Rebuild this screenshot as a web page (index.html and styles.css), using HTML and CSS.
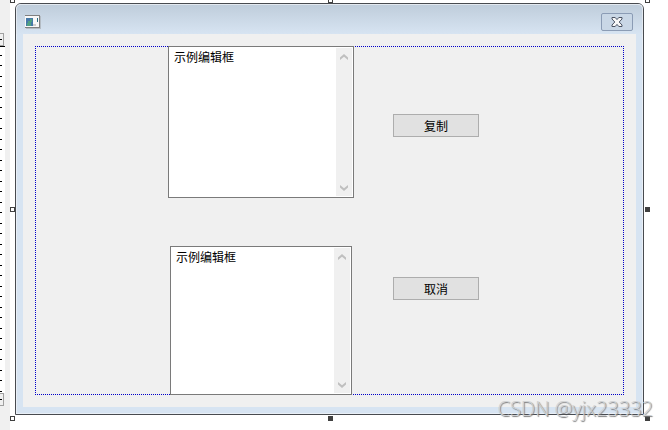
FILE: index.html
```html
<!DOCTYPE html>
<html lang="zh-CN">
<head>
    <meta charset="UTF-8">
    <meta name="viewport" content="width=device-width, initial-scale=1.0">
    <title>Dialog</title>
    <link rel="stylesheet" href="styles.css">
</head>
<body>

<aside class="ruler">
    <div class="thumb"></div>
    <div class="ticks"></div>
    <div class="thumb"></div>
</aside>

<main class="stage">
    <section class="dialog">
        <header class="titlebar">
            <svg class="app-icon" width="16" height="14" viewBox="0 0 16 14" shape-rendering="crispEdges">
                <rect x="0" y="1" width="15" height="12" fill="#f8f8f8"/>
                <path d="M0 0 H15 V1 H0 Z M14 1 H15 V12 H14 Z M0 12 H15 V13 H0 Z" fill="#808080"/>
                <path d="M15 1 H16 V14 H1 V13 H15 Z" fill="#b4bcc4"/>
                <rect x="1" y="3" width="7" height="8" fill="#4579a8"/>
                <path d="M2 11 V8 H3 V6 H5 V4 H7 V7 H6 V11 Z" fill="#4fa083"/>
                <rect x="12" y="3" width="1" height="4" fill="#2b6f84"/>
                <rect x="8" y="9" width="3" height="2" fill="#cfcfcf"/>
            </svg>
            <button class="close" type="button" aria-label="关闭">
                <svg width="12" height="10" viewBox="0 0 12 10">
                    <path d="M1 0.5 H4.2 L6 2.6 L7.8 0.5 H11 V2 L8.2 5 L11 8 V9.5 H7.8 L6 7.4 L4.2 9.5 H1 V8 L3.8 5 L1 2 Z" fill="#f8f8f8" stroke="#4b5363" stroke-width="1"/>
                </svg>
            </button>
        </header>
        <div class="client">
            <form class="form">
                <div class="edit">
                    <textarea aria-label="源文本">示例编辑框</textarea>
                    <div class="scroll">
                        <svg width="8" height="6" viewBox="0 0 8 6"><path d="M0 3.5 L4 0 L8 3.5 V6 L4 2.8 L0 6 Z" fill="#bfbfbf"/></svg>
                        <svg width="8" height="6" viewBox="0 0 8 6"><path d="M0 0 L4 3.2 L8 0 V2.5 L4 6 L0 2.5 Z" fill="#bfbfbf"/></svg>
                    </div>
                </div>
                <button class="btn copy" type="button">复制</button>
                <div class="edit target">
                    <textarea aria-label="目标文本">示例编辑框</textarea>
                    <div class="scroll">
                        <svg width="8" height="6" viewBox="0 0 8 6"><path d="M0 3.5 L4 0 L8 3.5 V6 L4 2.8 L0 6 Z" fill="#bfbfbf"/></svg>
                        <svg width="8" height="6" viewBox="0 0 8 6"><path d="M0 0 L4 3.2 L8 0 V2.5 L4 6 L0 2.5 Z" fill="#bfbfbf"/></svg>
                    </div>
                </div>
                <button class="btn cancel" type="button">取消</button>
            </form>
        </div>
    </section>

    <!-- resize handles -->
    <span class="handle top left"></span>
    <span class="handle top center"></span>
    <span class="handle top right"></span>
    <span class="handle middle left"></span>
    <span class="handle middle right solid"></span>
    <span class="handle bottom left"></span>
    <span class="handle bottom center solid"></span>
    <span class="handle bottom right solid"></span>
    <span class="watermark">CSDN @yjx23332</span>
</main>

</body>
</html>
```

FILE: styles.css
```css
* {
    box-sizing: border-box;
}

body {
    margin: 0;
    height: 100vh;
    display: flex;
    background-color: white;
    font-family: "Liberation Sans", "Noto Sans CJK SC", sans-serif;
    font-size: 12px;
    overflow: hidden;
}

/* Ruler on the left */
.ruler {
    width: 10px;
    padding: 33px 5px 24px 0;
    background-color: #f0f0f0;
    display: flex;
    flex-direction: column;
}

.thumb {
    width: 4px;
    height: 13px;
    border: 1px solid #a0a0a0;
    border-left: none;
    background: linear-gradient(black, black) left center / 2px 1px no-repeat #f0f0f0;
}

.ticks {
    flex: 1;
    border-top: 1px solid black;
    background: repeating-linear-gradient(to bottom, transparent 0, transparent 8px, black 8px, black 9px, transparent 9px, transparent 18px, black 18px, black 19px, transparent 19px, transparent 21px) left / 2px 100% no-repeat white;
}

/* Canvas with the dialog */
.stage {
    flex: 1;
    position: relative;
    padding: 3px 24px 15px 5px;
}

.dialog {
    height: 100%;
    display: flex;
    flex-direction: column;
    border: 1px solid #484b50;
    border-radius: 6px 6px 0 0;
    background-color: #d7e4f2;
    box-shadow: inset 0 0 0 1px #e9eff6;
    padding: 0 7px 7px;
}

.titlebar {
    height: 30px;
    margin: 0 -7px;
    padding: 5px 9px 0 8px;
    display: flex;
    justify-content: space-between;
    align-items: center;
    border: 1px solid #e3e9f0;
    border-width: 1px 1px 0;
    border-radius: 5px 5px 0 0;
    background: linear-gradient(#bfcddb, #d7e4f2);
}

.close {
    width: 32px;
    height: 18px;
    padding: 0;
    display: flex;
    justify-content: center;
    align-items: center;
    border: 1px solid #8b9cb5;
    border-radius: 2px;
    background-color: #c9d7e6;
}

.client {
    flex: 1;
    padding: 12px;
    background-color: #f0f0f0;
}

.form {
    height: 100%;
    padding-left: 132px;
    display: grid;
    grid-template-columns: 186px 86px;
    grid-template-rows: 151fr 148fr;
    gap: 48px 39px;
    border: 1px dotted #0000c8;
}

.edit {
    display: flex;
    margin-top: -1px;
    padding: 1px;
    border: 1px solid #7a7a7a;
    background-color: white;
}

.target {
    width: 182px;
    justify-self: center;
    margin: 0 0 -1px;
}

textarea {
    flex: 1;
    min-width: 0;
    padding: 1px 4px;
    border: none;
    outline: none;
    resize: none;
    overflow: hidden;
    background-color: white;
    color: black;
    font: inherit;
    line-height: 18px;
}

.scroll {
    width: 16px;
    padding: 6px 0 5px;
    display: flex;
    flex-direction: column;
    justify-content: space-between;
    align-items: center;
    background-color: #f0f0f0;
}

.btn {
    height: 23px;
    padding: 0;
    border: 1px solid #adadad;
    background-color: #e1e1e1;
    color: black;
    font: inherit;
}

.copy {
    margin-top: 67px;
}

.cancel {
    margin-top: 31px;
}

.handle {
    position: absolute;
    width: 5px;
    height: 5px;
    border: 1px solid #404040;
    background-color: white;
}

.top {
    top: -2px;
}

.middle {
    top: 207px;
}

.bottom {
    bottom: 9px;
}

.left {
    left: 0;
}

.center {
    left: 318px;
}

.right {
    right: 18px;
}

.solid {
    background-color: #404040;
}

.watermark {
    position: absolute;
    right: 15px;
    bottom: 8px;
    font-family: "Open Sans", "Noto Sans", sans-serif;
    font-size: 20px;
    font-weight: 300;
    line-height: 26px;
    color: #d0d2d4;
    text-shadow: 1px 1px 1px #777;
}
```
